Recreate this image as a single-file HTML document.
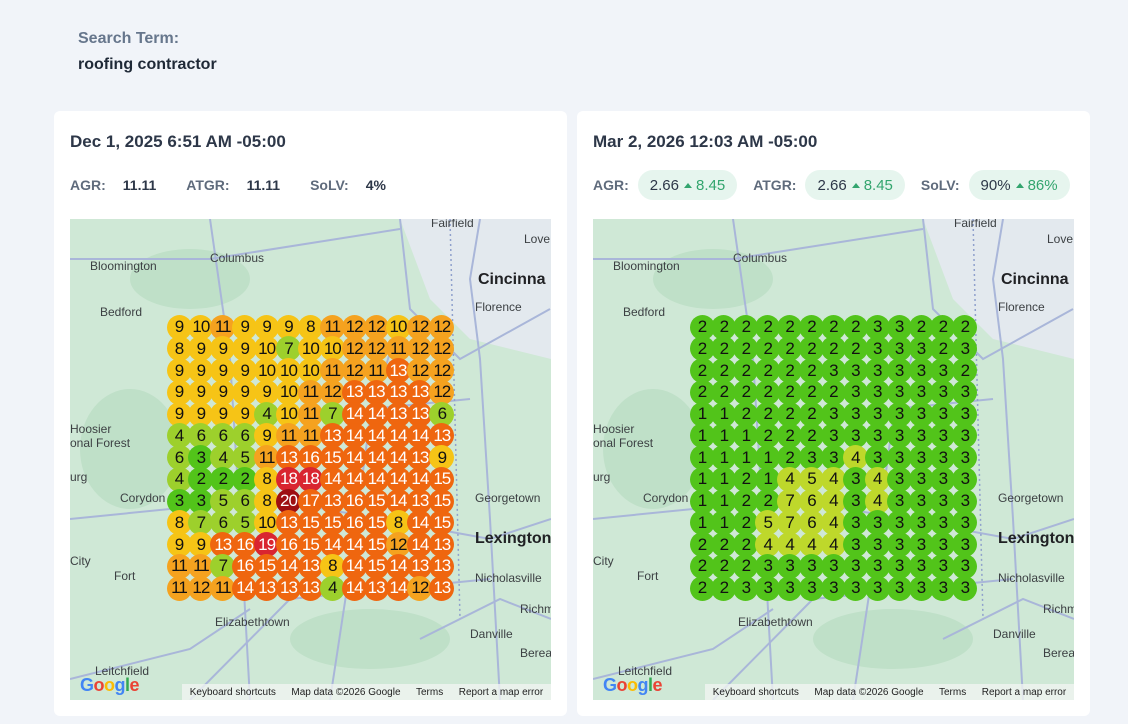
<!DOCTYPE html>
<html><head><meta charset="utf-8">
<style>
*{margin:0;padding:0;box-sizing:border-box}
body{width:1128px;height:724px;background:#f1f4f9;font-family:"Liberation Sans",sans-serif;position:relative;overflow:hidden;color:#1f2937}
.lbl{position:absolute;left:78px;top:30px;font-size:16px;color:#66768c;font-weight:bold}
.term{position:absolute;left:78px;top:56px;font-size:16px;color:#1f2937;font-weight:bold}
.card{position:absolute;top:111px;width:513px;height:605px;background:#fff;border-radius:6px}
.title{position:absolute;left:16px;top:21px;font-size:17px;font-weight:bold;color:#2d3748}
.met{position:absolute;left:16px;top:59px;height:30px;display:flex;align-items:center;font-size:14px;white-space:nowrap}
.k{color:#5f6b7c;font-weight:bold;margin-right:9px}
.v{color:#2d3748;font-weight:bold;margin-right:30px}
.pill{background:#e6f5ee;border-radius:15px;height:30px;padding:0 12px;display:inline-flex;align-items:center;margin-right:16px;color:#2d3748;font-size:15px;white-space:nowrap}
.pill b{font-weight:normal}
.up{color:#33a56e;margin-left:5px;display:inline-flex;align-items:center}
.up:before{content:"";display:inline-block;border-left:4px solid transparent;border-right:4px solid transparent;border-bottom:5px solid #33a56e;margin-right:4px}
.map{position:absolute;left:16px;top:108px;width:481px;height:481px;background:#cfe8d6;overflow:hidden}
.map .t{position:absolute;font-size:12px;color:#3c4043;white-space:nowrap}
.map .big{font-size:16px;font-weight:bold;color:#202124}
.c{position:absolute;width:25px;height:25px;border-radius:50%;font-size:17px;display:flex;align-items:center;justify-content:center;letter-spacing:-1px}
.foot{position:absolute;left:112px;right:0;bottom:0;height:16px;background:rgba(240,244,241,.8);font-size:10px;color:#222;display:flex;align-items:center;justify-content:space-around}
.g{position:absolute;left:10px;bottom:4px;font-size:18px;font-weight:bold;letter-spacing:-0.5px}
</style></head><body>
<div class="lbl">Search Term:</div>
<div class="term">roofing contractor</div>

<div class="card" style="left:54px">
<div class="title">Dec 1, 2025 6:51 AM -05:00</div>
<div class="met"><span class="k">AGR:</span><span class="v" style="margin-left:8px">11.11</span><span class="k">ATGR:</span><span class="v" style="margin-left:8px">11.11</span><span class="k">SoLV:</span><span class="v" style="margin-left:8px">4%</span></div>
<div class="map" id="m1"></div>
</div>

<div class="card" style="left:577px">
<div class="title">Mar 2, 2026 12:03 AM -05:00</div>
<div class="met"><span class="k">AGR:</span><span class="pill"><b>2.66</b><span class="up">8.45</span></span><span class="k">ATGR:</span><span class="pill"><b>2.66</b><span class="up">8.45</span></span><span class="k">SoLV:</span><span class="pill"><b>90%</b><span class="up">86%</span></span></div>
<div class="map" id="m2"></div>
</div>

<script>
var base='<svg width="481" height="481" style="position:absolute;left:0;top:0"><rect width="481" height="481" fill="#cfe8d6"/>'+
'<path d="M330 0 L481 0 L481 140 L400 120 L360 80Z" fill="#e3e9ee"/>'+
'<ellipse cx="120" cy="60" rx="60" ry="30" fill="#bfe0c8"/><ellipse cx="60" cy="230" rx="50" ry="60" fill="#bfe0c8"/><ellipse cx="300" cy="420" rx="80" ry="30" fill="#bfe0c8"/>'+
'<g fill="none" stroke="#a9b6d9" stroke-width="2">'+
'<path d="M140 0 L150 70 L160 140 L170 300 L180 481"/><path d="M0 40 L140 40 L330 10"/><path d="M330 0 L340 90 L390 140 L480 90"/>'+
'<path d="M410 0 L400 60 L410 140 L420 300 L430 481"/><path d="M0 300 L200 280 L420 320 L481 300"/><path d="M120 481 L220 380 L420 360"/>'+
'<path d="M0 460 L120 430 L180 390"/><path d="M200 200 L400 180"/><path d="M260 481 L280 350 L300 200 L330 100"/><path d="M350 420 L430 380 L481 400"/></g>'+
'<g fill="none" stroke="#8fa0cc" stroke-width="1.5" stroke-dasharray="2 3"><path d="M380 0 L385 200 L390 400"/></g></svg>';
var labels=[["Fairfield",361,-3],["Love",454,13],["Bloomington",20,40],["Columbus",140,32],["Cincinna",408,52,1],["Florence",405,81],["Bedford",30,86],["Hoosier",0,203],["onal Forest",0,217],["urg",0,251],["Corydon",50,272],["Georgetown",405,272],["Lexington",405,311,1],["City",0,335],["Fort",44,350],["Nicholasville",405,352],["Richm",450,383],["Elizabethtown",145,396],["Danville",400,408],["Berea",450,427],["Leitchfield",25,445]];
function col(v,m){if(m==2){return v<=3?'#52c41a':'#bed82b'}
if(v<=3)return'#52c41a';if(v<=7)return'#9dd02c';if(v<=10)return'#f6c416';if(v<=12)return'#f5a21f';if(v<=17)return'#ef660f';if(v<=19)return'#d92530';return'#9e0f12'}
var d1=[[9,10,11,9,9,9,8,11,12,12,10,12,12],[8,9,9,9,10,7,10,10,12,12,11,12,12],[9,9,9,9,10,10,10,11,12,11,13,12,12],[9,9,9,9,9,10,11,12,13,13,13,13,12],[9,9,9,9,4,10,11,7,14,14,13,13,6],[4,6,6,6,9,11,11,13,14,14,14,14,13],[6,3,4,5,11,13,16,15,14,14,14,13,9],[4,2,2,2,8,18,18,14,14,14,14,14,15],[3,3,5,6,8,20,17,13,16,15,14,13,15],[8,7,6,5,10,13,15,15,16,15,8,14,15],[9,9,13,16,19,16,15,14,14,15,12,14,13],[11,11,7,16,15,14,13,8,14,15,14,13,13],[11,12,11,14,13,13,13,4,14,13,14,12,13]];
var d2=[[2,2,2,2,2,2,2,2,3,3,2,2,2],[2,2,2,2,2,2,2,2,3,3,3,2,3],[2,2,2,2,2,2,3,3,3,3,3,3,2],[2,2,2,2,2,2,2,3,3,3,3,3,3],[1,1,2,2,2,2,3,3,3,3,3,3,3],[1,1,1,2,2,2,3,3,3,3,3,3,3],[1,1,1,1,2,3,3,4,3,3,3,3,3],[1,1,2,1,4,5,4,3,4,3,3,3,3],[1,1,2,2,7,6,4,3,4,3,3,3,3],[1,1,2,5,7,6,4,3,3,3,3,3,3],[2,2,2,4,4,4,4,3,3,3,3,3,3],[2,2,2,3,3,3,3,3,3,3,3,3,3],[2,2,3,3,3,3,3,3,3,3,3,3,3]];
function build(id,d,m){var h=base;labels.forEach(function(l){h+='<div class="t'+(l[3]?' big':'')+'" style="left:'+l[1]+'px;top:'+l[2]+'px">'+l[0]+'</div>'});
for(var r=0;r<13;r++)for(var c=0;c<13;c++){var v=d[r][c];var x=109+c*21.9-12.5,y=108+r*21.75-12.5;var w=(m==1&&v>=13);
h+='<div class="c" style="left:'+x+'px;top:'+y+'px;background:'+col(v,m)+';color:'+(w?'#fff':'#111')+'">'+v+'</div>'}
h+='<div class="g"><span style="color:#4285f4">G</span><span style="color:#ea4335">o</span><span style="color:#fbbc05">o</span><span style="color:#4285f4">g</span><span style="color:#34a853">l</span><span style="color:#ea4335">e</span></div>';
h+='<div class="foot"><span>Keyboard shortcuts</span><span>Map data ©2026 Google</span><span>Terms</span><span>Report a map error</span></div>';
document.getElementById(id).innerHTML=h}
build('m1',d1,1);build('m2',d2,2);
</script>
</body></html>
